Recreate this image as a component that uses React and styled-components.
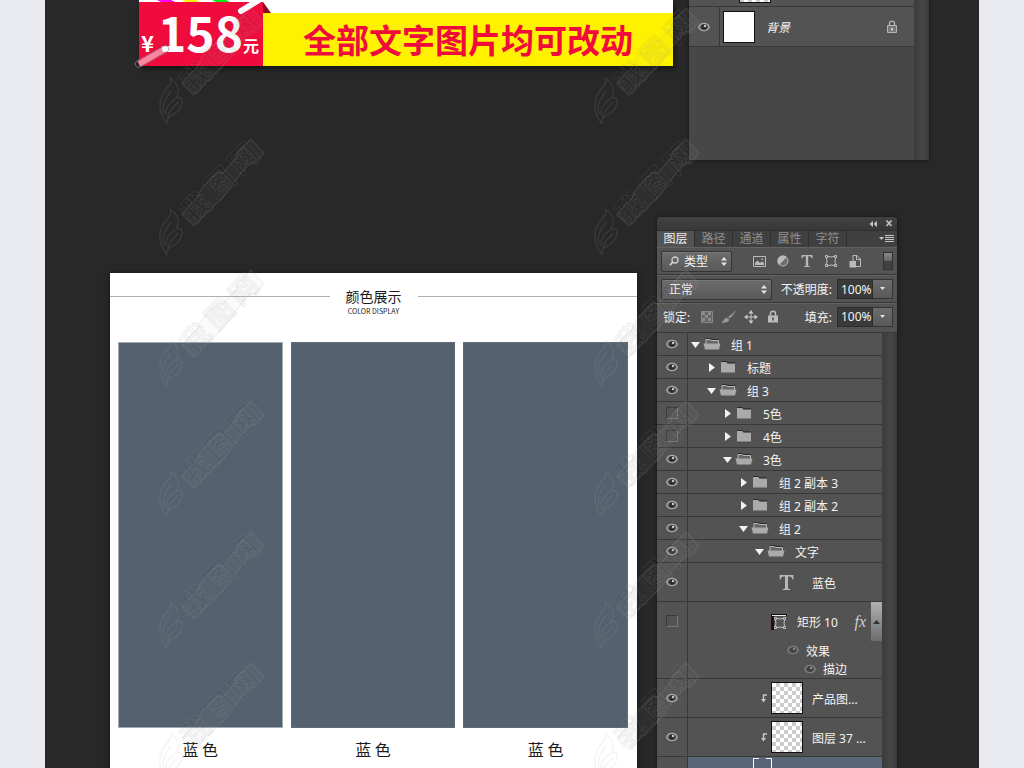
import { useState } from "react";
import styled, { createGlobalStyle } from "styled-components";

const GlobalStyle = createGlobalStyle`
  * {
    box-sizing: border-box;
  }

  body {
    margin: 0;
    background: #e9ebf0;
    font-family: "Noto Sans", "Noto Sans CJK SC", sans-serif;
    font-size: 12px;
  }

  button, input, select {
    font: inherit;
    color: inherit;
    margin: 0;
    padding: 0;
    border: 0;
    background: none;
  }

  svg {
    display: block;
    flex: none;
  }
`;

const Desk = styled.main`
  position: relative;
  max-width: 934px;
  height: 100vh;
  margin: 0 auto;
  overflow: hidden;
  background: #282828;
`;

const TopRow = styled.div`
  display: flex;
  align-items: flex-start;
  gap: 16px;
  height: 217px;
  padding: 0 50px 0 94px;
`;

const BottomRow = styled.div`
  display: flex;
  align-items: flex-start;
  gap: 20px;
  padding: 0 82px 0 65px;
`;

/* price banner */
const Banner = styled.section`
  flex: 1;
  display: flex;
  height: 66px;
  background: #fff;
  color: #fff;
  font-family: "Noto Sans CJK SC", sans-serif;
  font-weight: 700;
  box-shadow: 2px 3px 5px rgba(0, 0, 0, 0.5);
`;

const Price = styled.div`
  position: relative;
  flex: none;
  display: flex;
  align-items: baseline;
  width: 124px;
  height: 64px;
  margin-top: 2px;
  padding-left: 2px;
  background: #ef0b3c;
  line-height: 58px;
`;

const Currency = styled.span`
  width: 17px;
  font-size: 22px;
`;

const Amount = styled.span`
  font-size: 48px;
`;

const Unit = styled.span`
  font-size: 16px;
`;

const Sticks = styled.svg`
  position: absolute;
  left: -5px;
  top: -2px;
  overflow: visible;
`;

const Slogan = styled.p`
  flex: 1;
  margin: 13px 0 0;
  background: #fff200;
  color: #ef0b3c;
  font-size: 33px;
  line-height: 52px;
  text-align: center;
  white-space: nowrap;
`;

/* colour card */
const Card = styled.section`
  flex: 1;
  margin-top: 56px;
  padding-bottom: 30px;
  background: #fff;
  color: #1b1b1b;
  font-family: "Noto Sans CJK SC", sans-serif;
  box-shadow: 0 0 6px rgba(0, 0, 0, 0.5);
`;

const CardHead = styled.header`
  display: flex;
  gap: 16px;
  height: 69px;
  padding-top: 12px;

  &::before,
  &::after {
    content: "";
    flex: 1;
    height: 1px;
    margin-top: 11px;
    background: #b0b0b0;
  }
`;

const CardTitle = styled.h2`
  margin: 0;
  font-size: 14px;
  font-weight: 400;
  line-height: 22px;
  text-align: center;
`;

const CardSub = styled.p`
  margin: 0;
  font-size: 7px;
  line-height: 8px;
  text-align: center;
`;

const Swatches = styled.div`
  display: grid;
  grid-template-columns: repeat(3, 1fr);
  gap: 8px;
  padding: 0 9px 0 8px;
`;

const Swatch = styled.figure`
  margin: 0;
`;

const Chip = styled.div`
  height: 386px;
  background: #54616e;
  border: 1px solid ${(p) => (p.$outlined ? "#a3a9b0" : "#5f6b77")};
`;

const ChipName = styled.figcaption`
  padding-top: 9px;
  font-size: 16px;
  line-height: 24px;
  text-align: center;
`;

/* layers panel */
const Panel = styled.section`
  flex: none;
  width: 240px;
  background: #535353;
  color: #f4f4f4;
  border-radius: ${(p) => (p.$floating ? "4px 4px 0 0" : "0")};
  box-shadow: 0 0 4px rgba(0, 0, 0, 0.5);
  overflow: hidden;
`;

const PanelBar = styled.div`
  display: flex;
  align-items: center;
  justify-content: flex-end;
  gap: 8px;
  height: 13px;
  padding-right: 4px;
  background: linear-gradient(#424242, #383838);
`;

const IconButton = styled.button`
  display: flex;
  align-items: center;
  justify-content: center;
  width: ${(p) => p.$w || 8}px;
  color: #c4c4c4;
`;

const Tabs = styled.div`
  display: flex;
  height: 17px;
  background: #404040;
  border-top: 1px solid #2e2e2e;
`;

const Tab = styled.button`
  width: 38px;
  line-height: 16px;
  color: ${(p) => (p.$active ? "#f0f0f0" : "#8f8f8f")};
  background: ${(p) => (p.$active ? "#535353" : "transparent")};
  border-right: 1px solid #303030;
`;

const TabMenu = styled(IconButton)`
  margin: 0 3px 0 auto;
`;

const Tools = styled.div`
  display: flex;
  align-items: center;
  height: ${(p) => p.$h}px;
  padding: 0 4px;
  border-top: 1px solid #626262;
  border-bottom: 1px solid #383838;
`;

const LockTools = styled(Tools)`
  padding: 0 4px 3px 6px;
`;

const Picker = styled.label`
  display: flex;
  align-items: center;
  gap: 5px;
  width: ${(p) => p.$w}px;
  height: 21px;
  padding: 0 4px 0 7px;
  border: 1px solid #343434;
  border-radius: 2px;
  background: linear-gradient(#6c6c6c, #595959);
  box-shadow: inset 0 1px 0 #7a7a7a;

  select {
    flex: 1;
    min-width: 0;
    appearance: none;
    outline: none;
  }
`;

const Filters = styled.div`
  display: flex;
  gap: 8px;
  margin-left: 19px;
`;

const Toggle = styled.button`
  width: 10px;
  height: 18px;
  margin-left: auto;
  border: 1px solid #303030;
  background: linear-gradient(#888 0, #666 50%, #404040 50%);
`;

const Locks = styled.div`
  display: flex;
  gap: 5px;
  margin-left: 8px;
`;

const Percent = styled.label`
  display: flex;
  align-items: center;
  gap: 5px;
  margin-left: auto;
  white-space: nowrap;

  input {
    width: 36px;
    height: 20px;
    padding-left: 3px;
    border: 1px solid #2c2c2c;
    background: #3a3a3a;
  }
`;

const Drop = styled(IconButton)`
  height: 20px;
  border: 1px solid #343434;
  border-left: 0;
  background: linear-gradient(#6c6c6c, #595959);
`;

const Body = styled.div`
  display: flex;
`;

const Layers = styled.ul`
  flex: 1;
  min-width: 0;
  margin: 0;
  padding: 0;
  list-style: none;
`;

const Track = styled.div`
  flex: none;
  width: 15px;
  background: linear-gradient(90deg, #3c3c3c, #464646 60%, #3a3a3a);
`;

const Thumb = styled.div`
  display: flex;
  align-items: center;
  justify-content: center;
  width: 11px;
  height: 39px;
  margin-left: 2px;
  background: linear-gradient(#b0b0b0, #6c6c6c);
`;

const Row = styled.li`
  display: flex;
  border-bottom: 1px solid #383838;
`;

const EyeCell = styled.button`
  flex: none;
  display: flex;
  align-items: center;
  justify-content: center;
  align-self: flex-start;
  width: 30px;
  height: ${(p) => p.$h}px;
`;

const Cell = styled.div`
  flex: 1;
  min-width: 0;
  border-left: 1px solid #383838;
  background: ${(p) => (p.$selected ? "#596678" : "transparent")};
`;

const Line = styled.div`
  display: flex;
  align-items: center;
  gap: ${(p) => p.$gap || 3}px;
  height: ${(p) => p.$h}px;
  padding-left: ${(p) => p.$indent}px;
  white-space: nowrap;
`;

const Name = styled.span`
  margin-left: ${(p) => p.$space || 0}px;
  padding-top: 1px;
  font-style: ${(p) => (p.$italic ? "italic" : "normal")};
`;

const Fx = styled.i`
  margin-left: auto;
  font-family: "Liberation Serif", serif;
  font-size: 16px;
  color: #d0d0d0;
`;

const LockMark = styled.span`
  margin: 0 16px 0 auto;
`;

const Box = styled.span`
  width: 12px;
  height: 12px;
  border: 1px solid #3a3a3a;
  border-right-color: #777;
  border-bottom-color: #777;
`;

const Thumbnail = styled.span`
  flex: none;
  width: 32px;
  height: 32px;
  border: 1px solid #111;
  background: ${(p) =>
    p.$checker
      ? "repeating-conic-gradient(#ccc 0 25%, #fff 0 50%) 0 0 / 8px 8px"
      : "#fff"};
`;

const Clipped = styled.div`
  display: flex;
  align-items: ${(p) => (p.$end ? "flex-end" : "flex-start")};
  height: ${(p) => p.$h}px;
  padding: 0 0 ${(p) => (p.$end ? 3 : 0)}px ${(p) => p.$indent}px;
`;

const Empty = styled.li`
  height: 113px;
  background: #474747;
`;

/* site watermark, tiled over everything */
const Marks = styled.div`
  position: absolute;
  top: 7px;
  left: 113px;
  display: grid;
  grid-template-columns: repeat(2, 435px);
  grid-auto-rows: 131px;
  pointer-events: none;

  svg {
    overflow: visible;
  }
`;

function Eye({ dim }) {
  return (
    <svg width="12" height="10" viewBox="0 0 12 10" opacity={dim ? 0.5 : 1}>
      <path d="M.6 5.200C2.500 .2 9.500 .2 11.400 5.200C9.500 9.800 2.500 9.800 .6 5.200Z" fill="#5c5c5c" stroke="#aaa" strokeWidth="1.200" />
      <circle cx="6" cy="5" r="2.800" fill="#2c2c2c" />
      <circle cx="7" cy="4" r="1.200" fill="#c8c8c8" />
    </svg>
  );
}

function Arrow({ open }) {
  return (
    <svg width="9" height="9" viewBox="0 0 9 9" fill="#f2f2f2">
      <path d={open ? "M0 2H9L4.500 8Z" : "M2 0L8 4.500L2 9Z"} />
    </svg>
  );
}

function Folder({ open }) {
  return (
    <svg width="18" height="12" viewBox="0 0 18 12">
      {open ? (
        <>
          <path d="M3 6V1.500H7L8 2.500H15.500V6" fill="#666" stroke="#bbb" />
          <path d="M3 .5H7.500L8.500 1.500H16" fill="none" stroke="#2b2b2b" />
          <path d="M.5 5.500H17.500L16 11.500H2Z" fill="#aaa" />
        </>
      ) : (
        <>
          <path d="M2 1H7L8.500 2.500H16V11.500H2Z" fill="#aaa" />
          <path d="M2 .5H7.300L8.500 1.800H16" fill="none" stroke="#2b2b2b" />
        </>
      )}
    </svg>
  );
}

function UpDown() {
  return (
    <svg width="6" height="9" viewBox="0 0 6 9" fill="#e6e6e6">
      <path d="M0 3.500L3 0L6 3.500ZM0 5.500H6L3 9Z" />
    </svg>
  );
}

function TypeIcon({ size = 12 }) {
  return (
    <svg width={size} height={size} viewBox="0 0 12 12" fill="#b8b8b8">
      <path d="M.5 0H11.500V3.500H10.700C10.400 1.900 9.800 1.200 8.500 1.200H7.200V10.200C7.200 10.900 7.700 11.200 9 11.200V12H3V11.200C4.300 11.200 4.800 10.900 4.800 10.200V1.200H3.500C2.200 1.200 1.600 1.900 1.300 3.500H.5Z" />
    </svg>
  );
}

function ShapeIcon() {
  return (
    <svg width="12" height="12" viewBox="0 0 12 12" fill="none" stroke="#c0c0c0">
      <path d="M3 1.500Q6 2.500 9 1.500M3 10.500Q6 9.500 9 10.500M1.500 3Q2.500 6 1.500 9M10.500 3Q9.500 6 10.500 9" />
      <path d="M.5 .5H2.500V2.500H.5ZM9.500 .5H11.500V2.500H9.500ZM.5 9.500H2.500V11.500H.5ZM9.500 9.500H11.500V11.500H9.500Z" />
    </svg>
  );
}

function Padlock() {
  return (
    <svg width="12" height="13" viewBox="0 0 12 13">
      <path d="M3.500 6V3.500C3.500 .5 8.500 .5 8.500 3.500V6" fill="none" stroke="#bbb" strokeWidth="1.500" />
      <path d="M1 5.500H11V12.500H1Z" fill="#bbb" />
      <path d="M5.300 7.500H6.700V10.500H5.300Z" fill="#444" />
    </svg>
  );
}

function OutlinePadlock() {
  return (
    <svg width="12" height="13" viewBox="0 0 12 13" fill="none" stroke="#b4b4b4">
      <path d="M3.500 5.500V3.500C3.500 .3 8.500 .3 8.500 3.500V5.500" strokeWidth="1.400" />
      <path d="M1.500 5.500H10.500V12.500H1.500Z" fill="#777" />
      <path d="M6 8V10.500" stroke="#e4e4e4" strokeWidth="1.500" />
    </svg>
  );
}

function ClipArrow() {
  return (
    <svg width="8" height="9" viewBox="0 0 8 9">
      <path d="M7 1H3.500V6" fill="none" stroke="#c8c8c8" strokeWidth="1.400" />
      <path d="M1 5H6L3.500 8.500Z" fill="#c8c8c8" />
    </svg>
  );
}

function Caret({ up }) {
  return (
    <svg width="7" height="4" viewBox="0 0 7 4" fill={up ? "#333" : "#e6e6e6"}>
      <path d={up ? "M0 4L3.500 0L7 4Z" : "M1 0H6L3.500 3Z"} />
    </svg>
  );
}

function Watermark() {
  return (
    <svg width="120" height="131" viewBox="0 0 120 131" aria-hidden="true">
      <g fill="none" stroke="#aaa" strokeOpacity=".13" strokeWidth="1.500">
        <path d="M9 117C-2 103 1 90 9 81C13 77 14 74 12 71C20 77 23 83 18 91C29 87 24 105 14 108C10 110 8 113 9 117Z" />
        <path d="M6 107C3 96 9 90 13 84M8 108C7 98 14 94 17 92M10 110C10 103 16 101 20 95" />
        <path d="M24 77L32 67L38 62L44 50L60 34L65 35L78 20L80 14L93 1L106 15L97 25L92 25L84 34L78 42L66 58L56 68L36 88Z" fill="#aaa" fillOpacity=".05" />
      </g>
      <g
        fill="#000"
        fillOpacity=".05"
        stroke="#aaa"
        strokeOpacity=".12"
        fontFamily="'Noto Sans CJK SC', sans-serif"
        fontWeight="700"
        fontSize="29"
        textAnchor="middle"
      >
        <text transform="translate(38 70) rotate(-45)" y="10">我</text>
        <text transform="translate(62 45) rotate(-45)" y="10">图</text>
        <text transform="translate(86 21) rotate(-45)" y="10">网</text>
      </g>
    </svg>
  );
}

function LayerRow({ height = 22, visible = true, selected, children }) {
  const [shown, setShown] = useState(visible);

  return (
    <Row>
      <EyeCell $h={height} aria-label="显示图层" aria-pressed={shown} onClick={() => setShown(!shown)}>
        {!selected && (shown ? <Eye /> : <Box />)}
      </EyeCell>
      <Cell $selected={selected}>{children}</Cell>
    </Row>
  );
}

function Percentage({ label }) {
  return (
    <>
      <Percent>
        {label}
        <input defaultValue="100%" />
      </Percent>
      <Drop $w={20} aria-label={label}>
        <Caret />
      </Drop>
    </>
  );
}

const groups = [
  { name: "组 1", level: 0, open: true },
  { name: "标题", level: 1 },
  { name: "组 3", level: 1, open: true },
  { name: "5色", level: 2, visible: false },
  { name: "4色", level: 2, visible: false },
  { name: "3色", level: 2, open: true },
  { name: "组 2 副本 3", level: 3 },
  { name: "组 2 副本 2", level: 3 },
  { name: "组 2", level: 3, open: true },
  { name: "文字", level: 4, open: true },
];

const tabs = ["图层", "路径", "通道", "属性", "字符"];

function PriceBanner() {
  return (
    <Banner>
      <Price>
        <Currency>¥</Currency>
        <Amount>158</Amount>
        <Unit>元</Unit>
        <Sticks width="138" height="70" viewBox="0 0 138 70">
          <path d="M5 0H129V2H5Z" fill="#fff" />
          <path d="M23 0H37L41 2H27Z" fill="#f0f" />
          <path d="M48 0H62L66 2H52Z" fill="#fff200" />
          <path d="M78 0H92L96 2H82Z" fill="#0e1" />
          <path d="M129 2L137 13H129Z" fill="#8c0720" />
          <path d="M107 11L125 0" stroke="#fff" strokeWidth="6" strokeLinecap="round" />
          <path d="M5 64L31 49" stroke="#f9869f" strokeWidth="6" />
          <circle cx="31" cy="49" r="3" fill="#fff" />
          <path d="M3 61L30 46A3 3 0 0 1 33 52L6 67A3 3 0 0 1 3 61Z" fill="none" stroke="#888" strokeWidth=".7" />
        </Sticks>
      </Price>
      <Slogan>全部文字图片均可改动</Slogan>
    </Banner>
  );
}

function ColorCard() {
  return (
    <Card>
      <CardHead>
        <div>
          <CardTitle>颜色展示</CardTitle>
          <CardSub>COLOR DISPLAY</CardSub>
        </div>
      </CardHead>
      <Swatches>
        {[0, 1, 2].map((i) => (
          <Swatch key={i}>
            <Chip $outlined={i === 0} />
            <ChipName>蓝 色</ChipName>
          </Swatch>
        ))}
      </Swatches>
    </Card>
  );
}

function BackgroundPanel() {
  return (
    <Panel>
      <Body>
        <Layers>
          <Row>
            <Clipped $h={6} $indent={50} $end>
              <Thumbnail $checker />
            </Clipped>
          </Row>
          <LayerRow height={39}>
            <Line $h={39} $indent={3}>
              <Thumbnail />
              <Name $space={8} $italic>背景</Name>
              <LockMark>
                <OutlinePadlock />
              </LockMark>
            </Line>
          </LayerRow>
          <Empty />
        </Layers>
        <Track />
      </Body>
    </Panel>
  );
}

function LayersPanel() {
  const [active, setActive] = useState(tabs[0]);

  return (
    <Panel $floating>
      <PanelBar>
        <IconButton aria-label="折叠">
          <svg width="8" height="6" viewBox="0 0 8 6" fill="currentColor">
            <path d="M4 0V6L.5 3ZM8 0V6L4.500 3Z" />
          </svg>
        </IconButton>
        <IconButton aria-label="关闭">
          <svg width="8" height="7" viewBox="0 0 8 7" stroke="currentColor" strokeWidth="1.600">
            <path d="M1.500 .5L6.500 6M6.500 .5L1.500 6" />
          </svg>
        </IconButton>
      </PanelBar>
      <Tabs>
        {tabs.map((tab) => (
          <Tab key={tab} $active={tab === active} onClick={() => setActive(tab)}>
            {tab}
          </Tab>
        ))}
        <TabMenu $w={15} aria-label="菜单">
          <svg width="15" height="8" viewBox="0 0 15 8">
            <path d="M0 2H5L2.500 5Z" fill="currentColor" />
            <path d="M6 .5H15M6 2.500H15M6 4.500H15M6 6.500H15" stroke="currentColor" />
          </svg>
        </TabMenu>
      </Tabs>
      <Tools $h={28}>
        <Picker $w={71}>
          <svg width="10" height="10" viewBox="0 0 10 10" fill="none" stroke="#d0d0d0" strokeWidth="1.300">
            <circle cx="6" cy="4" r="3" />
            <path d="M3.800 6.200L.8 9.200" strokeWidth="1.800" />
          </svg>
          <select aria-label="筛选类型">
            <option>类型</option>
          </select>
          <UpDown />
        </Picker>
        <Filters>
          <IconButton $w={16} aria-label="像素图层">
            <svg width="13" height="11" viewBox="0 0 13 11">
              <path d="M.5 .5H12.500V10.500H.5Z" fill="none" stroke="#bbb" />
              <path d="M2 9V7L4.500 4.500L7 7L9 5.500L11 7V9ZM8.500 2.500H10V4H8.500Z" fill="#bbb" />
            </svg>
          </IconButton>
          <IconButton $w={16} aria-label="调整图层">
            <svg width="12" height="12" viewBox="0 0 12 12">
              <circle cx="6" cy="6" r="5" fill="#6c6c6c" stroke="#bbb" />
              <path d="M9.900 2.100A5.500 5.500 0 1 0 2.100 9.900Z" fill="#bbb" />
            </svg>
          </IconButton>
          <IconButton $w={16} aria-label="文字图层">
            <TypeIcon />
          </IconButton>
          <IconButton $w={16} aria-label="形状图层">
            <ShapeIcon />
          </IconButton>
          <IconButton $w={16} aria-label="智能对象">
            <svg width="12" height="13" viewBox="0 0 12 13">
              <path d="M4 6V.5H8L11.500 4V11.500H7" fill="none" stroke="#bbb" />
              <path d="M7.500 .5V4.500H11.500" fill="none" stroke="#bbb" />
              <path d="M.5 6H7V12.500H.5Z" fill="#bbb" />
            </svg>
          </IconButton>
        </Filters>
        <Toggle aria-label="筛选开关" />
      </Tools>
      <Tools $h={28}>
        <Picker $w={111}>
          <select aria-label="混合模式">
            <option>正常</option>
          </select>
          <UpDown />
        </Picker>
        <Percentage label="不透明度:" />
      </Tools>
      <LockTools $h={30}>
        锁定:
        <Locks>
          <IconButton $w={17} aria-label="锁定透明像素">
            <svg width="12" height="12" viewBox="0 0 12 12">
              <path d="M.5 .5H11.500V11.500H.5Z" fill="#666" stroke="#888" />
              <path d="M1 1H4V4H1ZM7 1H10V4H7ZM4 4H7V7H4ZM1 7H4V10H1ZM7 7H10V10H7Z" fill="#8c8c8c" />
            </svg>
          </IconButton>
          <IconButton $w={17} aria-label="锁定图像像素">
            <svg width="16" height="13" viewBox="0 0 16 13" fill="#999">
              <path d="M16 0L9 8.500L7 7ZM0 12.500C3 12 2.500 8 6 7.800L8.300 9.800C7.500 13 3 13 0 12.500Z" />
            </svg>
          </IconButton>
          <IconButton $w={17} aria-label="锁定位置">
            <svg width="14" height="14" viewBox="0 0 14 14">
              <path d="M7 2V12M2 7H12" stroke="#c6c6c6" />
              <path d="M7 0L9.500 3.500H4.500ZM7 14L4.500 10.500H9.500ZM0 7L3.500 4.500V9.500ZM14 7L10.500 9.500V4.500Z" fill="#c6c6c6" />
            </svg>
          </IconButton>
          <IconButton $w={17} aria-label="锁定全部">
            <Padlock />
          </IconButton>
        </Locks>
        <Percentage label="填充:" />
      </LockTools>
      <Body>
        <Layers>
          {groups.map((group) => (
            <LayerRow key={group.name} visible={group.visible}>
              <Line $h={22} $indent={3 + group.level * 16}>
                <Arrow open={group.open} />
                <Folder open={group.open} />
                <Name $space={7}>{group.name}</Name>
              </Line>
            </LayerRow>
          ))}
          <LayerRow height={38}>
            <Line $h={38} $indent={91}>
              <TypeIcon size={15} />
              <Name $space={15}>蓝色</Name>
            </Line>
          </LayerRow>
          <LayerRow height={38} visible={false}>
            <Line $h={39} $indent={83}>
              <svg width="16" height="16" viewBox="0 0 16 16">
                <path d="M0 0H16V2H0Z" fill="#111" />
                <path d="M1 1.500H15" stroke="#eee" />
                <path d="M0 2H3V16H0Z" fill="#2a0c0c" />
                <svg x="3" y="3">
                  <ShapeIcon />
                </svg>
              </svg>
              <Name $space={7}>矩形 10</Name>
              <Fx>fx</Fx>
              <Thumb>
                <Caret up />
              </Thumb>
            </Line>
            <Line $h={18} $indent={99}>
              <Eye dim />
              <Name $space={4}>效果</Name>
            </Line>
            <Line $h={19} $indent={116}>
              <Eye dim />
              <Name $space={4}>描边</Name>
            </Line>
          </LayerRow>
          {["产品图...", "图层 37 ..."].map((name) => (
            <LayerRow key={name} height={38}>
              <Line $h={38} $indent={72}>
                <ClipArrow />
                <Thumbnail $checker />
                <Name $space={6}>{name}</Name>
              </Line>
            </LayerRow>
          ))}
          <LayerRow height={38} selected>
            <Clipped $h={38} $indent={65}>
              <svg width="19" height="36" viewBox="0 0 19 36" fill="none" stroke="#fff">
                <path d="M6 1.500H.5V36M13 1.500H18.500V36" />
              </svg>
            </Clipped>
          </LayerRow>
        </Layers>
        <Track />
      </Body>
    </Panel>
  );
}

export default function App() {
  return (
    <>
      <GlobalStyle />
      <Desk>
        <TopRow>
          <PriceBanner />
          <BackgroundPanel />
        </TopRow>
        <BottomRow>
          <ColorCard />
          <LayersPanel />
        </BottomRow>
        <Marks>
          {Array.from({ length: 12 }, (_, i) => (
            <Watermark key={i} />
          ))}
        </Marks>
      </Desk>
    </>
  );
}
